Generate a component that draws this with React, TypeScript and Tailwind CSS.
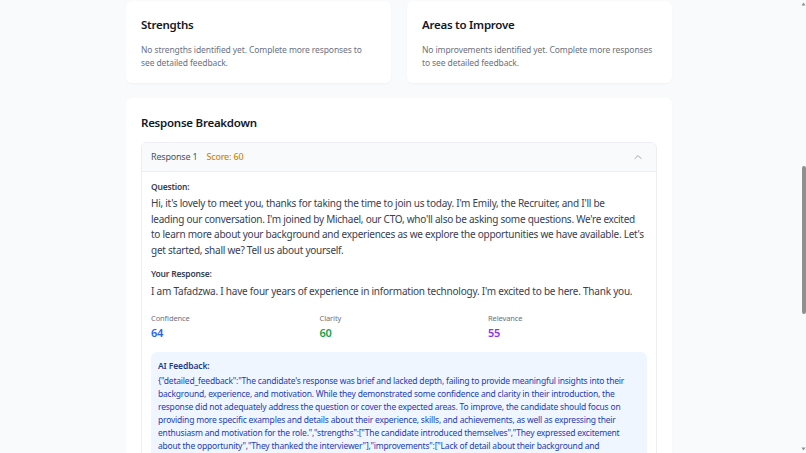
import React from "react";
import { ChevronUp } from "lucide-react";

const feedback =
  '{"detailed_feedback":"The candidate\'s response was brief and lacked depth, failing to provide meaningful insights into their background, experience, and motivation. While they demonstrated some confidence and clarity in their introduction, the response did not adequately address the question or cover the expected areas. To improve, the candidate should focus on providing more specific examples and details about their experience, skills, and achievements, as well as expressing their enthusiasm and motivation for the role.","strengths":["The candidate introduced themselves","They expressed excitement about the opportunity","They thanked the interviewer"],"improvements":["Lack of detail about their background and experience","Did not address the question fully","Missing specific examples"]}';

function SmallCard({ title, text }: { title: string; text: string }) {
  return (
    <div className="flex-1 bg-white rounded-[6px] shadow-[0_1px_2px_rgba(0,0,0,0.04)] px-[15px] pt-[15px] pb-[14px]">
      <h3 className="text-[11.5px] leading-[18px] font-semibold tracking-[-0.25px] text-[#111827]">{title}</h3>
      <p className="mt-[9px] text-[8.5px] leading-[13px] tracking-[-0.1px] text-[#6b7280]">{text}</p>
    </div>
  );
}

function Metric({ label, value, color }: { label: string; value: string; color: string }) {
  return (
    <div>
      <div className="text-[7.5px] leading-[12px] tracking-[-0.1px] text-[#6b7280]">{label}</div>
      <div className={`text-[11px] leading-[17px] font-semibold tracking-[-0.3px] ${color}`}>{value}</div>
    </div>
  );
}

export default function App() {
  return (
    <div
      className="h-[453px] w-[806px] overflow-hidden bg-[#f9fafb] flex"
      style={{ fontFamily: '"Noto Sans", "Open Sans", sans-serif' }}
    >
      <div className="w-[801px] shrink-0">
        <div className="ml-[126px] w-[546px] pt-[1px]">
          <div className="flex gap-[16px]">
            <SmallCard
              title="Strengths"
              text="No strengths identified yet. Complete more responses to see detailed feedback."
            />
            <SmallCard
              title="Areas to Improve"
              text="No improvements identified yet. Complete more responses to see detailed feedback."
            />
          </div>

          <div className="mt-[15px] bg-white rounded-[6px] shadow-[0_1px_2px_rgba(0,0,0,0.04)] px-[15px] pt-[16px] pb-[20px]">
            <h3 className="text-[11.5px] leading-[18px] font-semibold tracking-[-0.25px] text-[#111827]">Response Breakdown</h3>
            <div className="mt-[10px] border border-[#eceef1] rounded-[6px] overflow-hidden">
              <div className="h-[29px] bg-[#f9fafb] border-b border-[#eceef1] flex items-center justify-between pl-[9px] pr-[12px]">
                <div className="flex items-center gap-[9px] text-[9px] tracking-[-0.2px]">
                  <span className="text-[#4b5563]">Response 1</span>
                  <span className="text-[#ca8a04] font-medium">Score: 60</span>
                </div>
                <ChevronUp size={12} className="text-[#9ca3af]" strokeWidth={2} />
              </div>
              <div className="px-[9px] pt-[8px] pb-[12px]">
                <div className="text-[8.5px] leading-[13px] font-semibold tracking-[-0.2px] text-[#374151]">Question:</div>
                <p className="mt-[3px] text-[10px] leading-[15.5px] tracking-[-0.25px] text-[#374151]">
                  Hi, it's lovely to meet you, thanks for taking the time to join us today. I'm Emily, the Recruiter, and I'll be
                  <br />
                  leading our conversation. I'm joined by Michael, our CTO, who'll also be asking some questions. We're excited
                  <br />
                  to learn more about your background and experiences as we explore the opportunities we have available. Let's
                  <br />
                  get started, shall we? Tell us about yourself.
                </p>
                <div className="mt-[9px] text-[8.5px] leading-[13px] font-semibold tracking-[-0.2px] text-[#374151]">Your Response:</div>
                <p className="mt-[4px] text-[10px] leading-[15.5px] tracking-[-0.22px] text-[#374151]">
                  I am Tafadzwa. I have four years of experience in information technology. I'm excited to be here. Thank you.
                </p>
                <div className="mt-[12px] grid grid-cols-3 gap-[9.5px]">
                  <Metric label="Confidence" value="64" color="text-[#2563eb]" />
                  <Metric label="Clarity" value="60" color="text-[#16a34a]" />
                  <Metric label="Relevance" value="55" color="text-[#9333ea]" />
                </div>
                <div className="mt-[11px] bg-[#eff6ff] rounded-[6px] px-[7px] pt-[7px] pb-[10px]">
                  <div className="text-[8.5px] leading-[13px] font-semibold tracking-[-0.1px] text-[#1e3a8a]">AI Feedback:</div>
                  <p className="mt-[2px] text-[8.5px] leading-[13px] tracking-[-0.2px] text-[#1e40af] break-words">{feedback}</p>
                </div>
              </div>
            </div>
          </div>
        </div>
      </div>
      <div className="w-[5px] shrink-0 bg-[#f9fafb] flex flex-col items-center">
        <svg width="5" height="6" viewBox="0 0 5 6" className="mt-[1px]">
          <path d="M0.5 4.5 L2.5 1.5 L4.5 4.5 Z" fill="#8f8f8f" />
        </svg>
        <div className="mt-[159px] w-[4px] h-[148px] rounded-[2px] bg-[#8f8f8f]" />
        <div className="flex-1" />
        <svg width="5" height="6" viewBox="0 0 5 6" className="mb-[1px]">
          <path d="M0.5 1.5 L2.5 4.5 L4.5 1.5 Z" fill="#8f8f8f" />
        </svg>
      </div>
    </div>
  );
}
